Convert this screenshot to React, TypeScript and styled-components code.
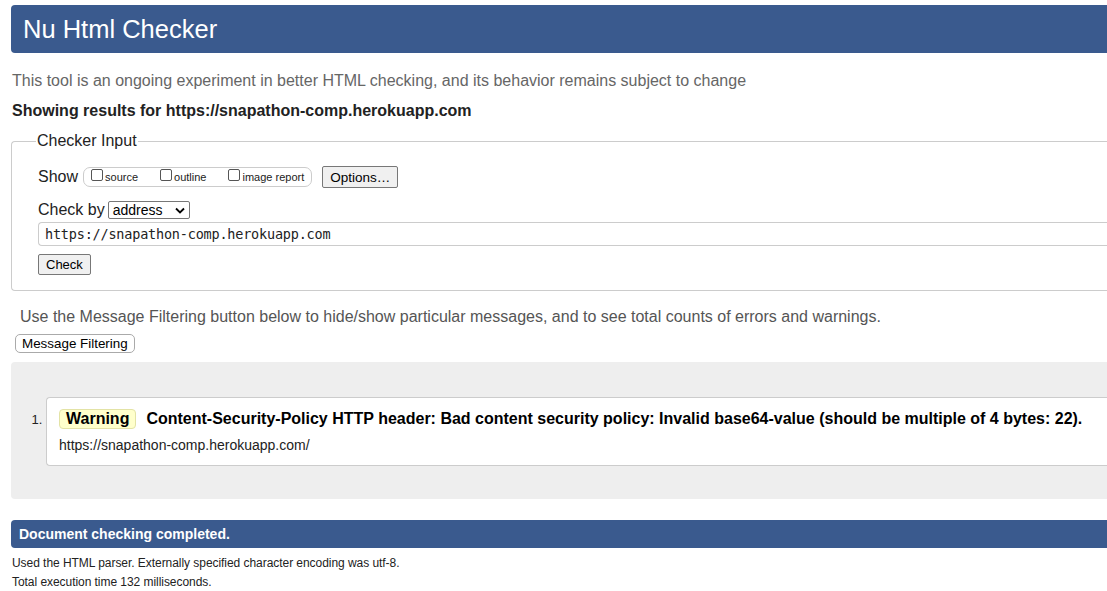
import React from "react";
import styled, { createGlobalStyle } from "styled-components";

const Global = createGlobalStyle`
  html, body { margin: 0; padding: 0; overflow: hidden; background: #fff; }
  body { font-family: "Liberation Sans", Arial, sans-serif; color: #222; }
`;

const Page = styled.div`
  width: 1180px;
  padding: 5px 0 0 11px;
  box-sizing: border-box;
`;

const Header = styled.h1`
  margin: 0;
  height: 48px;
  display: flex;
  align-items: center;
  padding-left: 12px;
  background: #3a5a8e;
  color: #fff;
  border-radius: 4px 0 0 4px;
  font-size: 25.5px;
  font-weight: normal;
`;

const Intro = styled.p`
  margin: 18px 0 0 1px;
  font-size: 16px;
  line-height: 20px;
  color: #666;
`;

const Showing = styled.p`
  margin: 10px 0 0 1px;
  font-size: 16px;
  line-height: 20px;
  font-weight: bold;
  color: #222;
`;

const Fieldset = styled.fieldset`
  margin: 11px 0 0 0;
  padding: 13px 26px 15px 26px;
  border: 1px solid #ccc;
  border-right: none;
  border-radius: 4px 0 0 4px;
`;

const Legend = styled.legend`
  padding: 0 1px;
  margin-left: -2px;
  font-size: 16px;
  color: #222;
`;

const Row = styled.div<{ $mt?: number }>`
  display: flex;
  align-items: center;
  margin-top: ${(p) => p.$mt ?? 0}px;
  font-size: 16px;
`;

const Label = styled.span<{ $gap: number }>`
  margin-right: ${(p) => p.$gap}px;
`;

const CheckGroup = styled.div`
  display: flex;
  align-items: center;
  height: 18px;
  padding: 0 7px 0 7px;
  border: 1px solid #ccc;
  border-radius: 7px;
`;

const CheckItem = styled.label<{ $gap?: number }>`
  display: flex;
  align-items: center;
  font-size: 11px;
  margin-right: ${(p) => p.$gap ?? 0}px;
`;

const Box = styled.span`
  display: inline-block;
  width: 12px;
  height: 12px;
  border: 1px solid #555;
  border-radius: 2px;
  margin-right: 2px;
  box-sizing: border-box;
  position: relative;
  top: -2px;
`;

const Button = styled.button`
  font-family: "Liberation Sans", Arial, sans-serif;
  font-size: 13px;
  color: #000;
  background: #f0f0f0;
  border: 1px solid #777;
  border-radius: 2px;
  padding: 0 7px;
  height: 21px;
  line-height: 19px;
  cursor: pointer;
`;

const OptionsButton = styled(Button)`
  margin-left: 10px;
  font-size: 13.5px;
  height: 22px;
`;

const Select = styled.div`
  display: flex;
  align-items: center;
  justify-content: space-between;
  width: 82px;
  height: 18px;
  box-sizing: border-box;
  border: 1px solid #777;
  border-radius: 2px;
  padding: 0 4px 0 4px;
  font-size: 14px;
  color: #000;
`;

const UrlInput = styled.div`
  margin-top: 3px;
  height: 24px;
  box-sizing: border-box;
  border: 1px solid #ccc;
  border-right: none;
  border-radius: 4px 0 0 4px;
  padding-left: 6px;
  display: flex;
  align-items: center;
  font-family: "DejaVu Sans Mono", monospace;
  font-size: 13.5px;
  color: #222;
  letter-spacing: -0.2px;
`;

const CheckRow = styled.div`
  margin-top: 8px;
  display: flex;
`;

const Note = styled.p`
  margin: 16px 0 0 9px;
  font-size: 16px;
  line-height: 20px;
  color: #555;
`;

const FilterRow = styled.div`
  margin: 7px 0 0 4px;
`;

const FilterButton = styled(Button)`
  height: 19px;
  line-height: 17px;
  font-size: 13.4px;
  padding: 0 6px;
  border: 1px solid #aaa;
  border-radius: 5px;
  background: #fff;
`;

const Results = styled.div`
  margin-top: 9px;
  background: #eee;
  border-radius: 4px 0 0 4px;
  padding: 35px 0 33px 0;
`;

const List = styled.ol`
  margin: 0;
  padding: 0 0 0 35px;
`;

const Item = styled.li`
  font-size: 13px;
  color: #222;
`;

const Card = styled.div`
  background: #fff;
  border: 1px solid #ccc;
  border-right: none;
  border-radius: 4px 0 0 4px;
  padding: 11px 0 12px 12px;
`;

const MsgLine = styled.div`
  display: flex;
  align-items: center;
  font-size: 16px;
  font-weight: bold;
  color: #000;
`;

const Badge = styled.span`
  display: inline-block;
  background: #ffffcc;
  border: 1px solid #e3e3a6;
  border-radius: 4px;
  padding: 0 6px;
  height: 18px;
  line-height: 18px;
  margin-right: 10px;
  font-size: 16px;
`;

const MsgText = styled.span`
  letter-spacing: 0;
`;

const Location = styled.div`
  margin-top: 8px;
  font-size: 14px;
  color: #222;
`;

const Footer = styled.h2`
  margin: 21px 0 0 0;
  height: 28px;
  display: flex;
  align-items: center;
  padding-left: 8px;
  background: #3a5a8e;
  color: #fff;
  border-radius: 4px 0 0 4px;
  font-size: 14px;
  font-weight: bold;
`;

const Small = styled.p<{ $mt: number }>`
  margin: ${(p) => p.$mt}px 0 0 1px;
  font-size: 12px;
  line-height: 14px;
  color: #222;
  letter-spacing: -0.05px;
`;

const Chevron = () => (
  <svg width="10" height="7" viewBox="0 0 10 7">
    <path d="M1 1.5 L5 5.5 L9 1.5" fill="none" stroke="#000" strokeWidth="1.8" />
  </svg>
);

export default function App() {
  return (
    <>
      <Global />
      <Page>
        <Header>Nu Html Checker</Header>
        <Intro>This tool is an ongoing experiment in better HTML checking, and its behavior remains subject to change</Intro>
        <Showing>Showing results for https://snapathon-comp.herokuapp.com</Showing>
        <Fieldset>
          <Legend>Checker Input</Legend>
          <Row $mt={3}>
            <Label $gap={5}>Show</Label>
            <CheckGroup>
              <CheckItem $gap={22}><Box />source</CheckItem>
              <CheckItem $gap={22}><Box />outline</CheckItem>
              <CheckItem><Box />image report</CheckItem>
            </CheckGroup>
            <OptionsButton>Options…</OptionsButton>
          </Row>
          <Row $mt={13}>
            <Label $gap={3}>Check by</Label>
            <Select>
              <span>address</span>
              <Chevron />
            </Select>
          </Row>
          <UrlInput>https://snapathon-comp.herokuapp.com</UrlInput>
          <CheckRow>
            <Button>Check</Button>
          </CheckRow>
        </Fieldset>
        <Note>Use the Message Filtering button below to hide/show particular messages, and to see total counts of errors and warnings.</Note>
        <FilterRow>
          <FilterButton>Message Filtering</FilterButton>
        </FilterRow>
        <Results>
          <List>
            <Item>
              <Card>
                <MsgLine>
                  <Badge>Warning</Badge>
                  <MsgText>Content-Security-Policy HTTP header: Bad content security policy: Invalid base64-value (should be multiple of 4 bytes: 22).</MsgText>
                </MsgLine>
                <Location>https://snapathon-comp.herokuapp.com/</Location>
              </Card>
            </Item>
          </List>
        </Results>
        <Footer>Document checking completed.</Footer>
        <Small $mt={8}>Used the HTML parser. Externally specified character encoding was utf-8.</Small>
        <Small $mt={5}>Total execution time 132 milliseconds.</Small>
      </Page>
    </>
  );
}
